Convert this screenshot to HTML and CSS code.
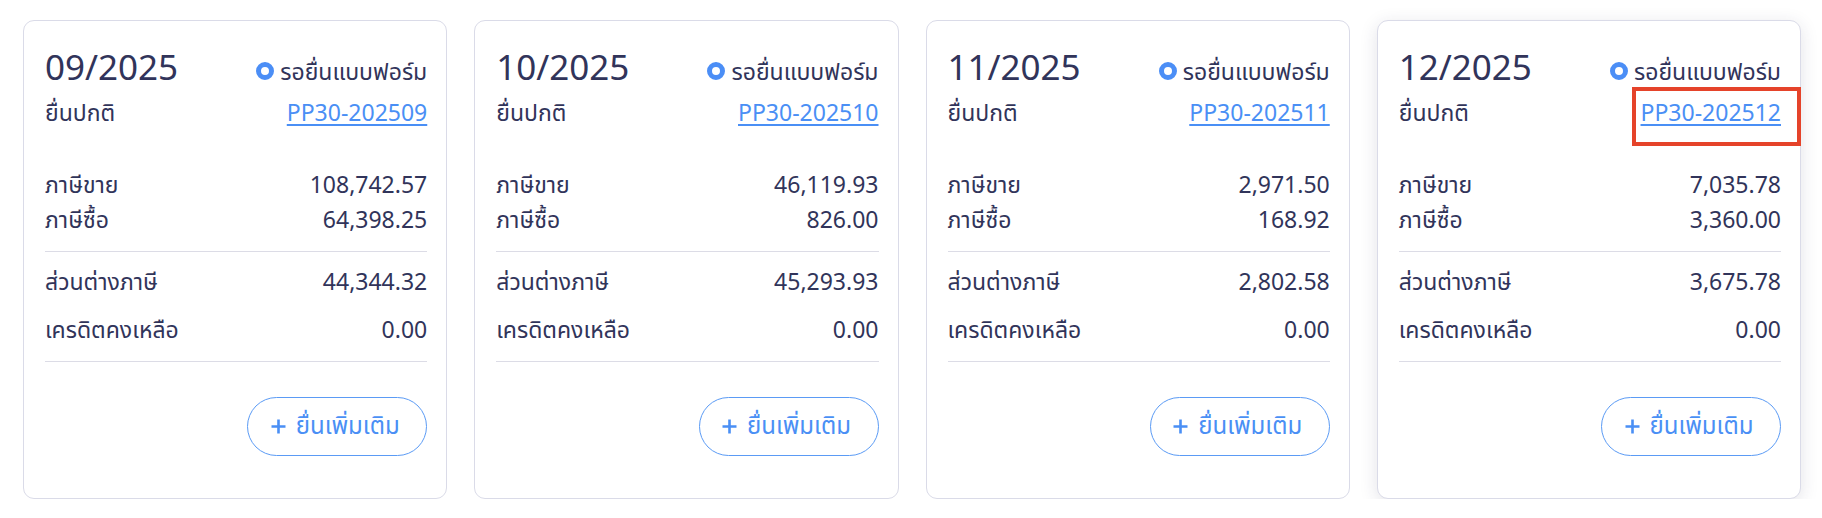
FILE: index.html
```html
<!DOCTYPE html>
<html lang="th">
<head>
<meta charset="utf-8">
<link rel="stylesheet" href="styles.css">
</head>
<body>
<div class="cards">
  <div class="card">
    <div class="head">
      <div class="period">09/2025</div>
      <div class="status"><span class="dot"></span>รอยื่นแบบฟอร์ม</div>
    </div>
    <div class="row sub"><span>ยื่นปกติ</span><a class="link" href="#">PP30-202509</a></div>
    <div class="group first">
      <div class="row"><span>ภาษีขาย</span><span>108,742.57</span></div>
      <div class="row"><span>ภาษีซื้อ</span><span>64,398.25</span></div>
    </div>
    <div class="group second">
      <div class="row"><span>ส่วนต่างภาษี</span><span>44,344.32</span></div>
      <div class="row"><span>เครดิตคงเหลือ</span><span>0.00</span></div>
    </div>
    <div class="actions"><button class="btn"><svg class="plus" width="15" height="15" viewBox="0 0 15 15"><path d="M7.5 0.5v14M0.5 7.5h14" stroke="currentColor" stroke-width="2.6" fill="none"/></svg><span>ยื่นเพิ่มเติม</span></button></div>
  </div>
  <div class="card">
    <div class="head">
      <div class="period">10/2025</div>
      <div class="status"><span class="dot"></span>รอยื่นแบบฟอร์ม</div>
    </div>
    <div class="row sub"><span>ยื่นปกติ</span><a class="link" href="#">PP30-202510</a></div>
    <div class="group first">
      <div class="row"><span>ภาษีขาย</span><span>46,119.93</span></div>
      <div class="row"><span>ภาษีซื้อ</span><span>826.00</span></div>
    </div>
    <div class="group second">
      <div class="row"><span>ส่วนต่างภาษี</span><span>45,293.93</span></div>
      <div class="row"><span>เครดิตคงเหลือ</span><span>0.00</span></div>
    </div>
    <div class="actions"><button class="btn"><svg class="plus" width="15" height="15" viewBox="0 0 15 15"><path d="M7.5 0.5v14M0.5 7.5h14" stroke="currentColor" stroke-width="2.6" fill="none"/></svg><span>ยื่นเพิ่มเติม</span></button></div>
  </div>
  <div class="card">
    <div class="head">
      <div class="period">11/2025</div>
      <div class="status"><span class="dot"></span>รอยื่นแบบฟอร์ม</div>
    </div>
    <div class="row sub"><span>ยื่นปกติ</span><a class="link" href="#">PP30-202511</a></div>
    <div class="group first">
      <div class="row"><span>ภาษีขาย</span><span>2,971.50</span></div>
      <div class="row"><span>ภาษีซื้อ</span><span>168.92</span></div>
    </div>
    <div class="group second">
      <div class="row"><span>ส่วนต่างภาษี</span><span>2,802.58</span></div>
      <div class="row"><span>เครดิตคงเหลือ</span><span>0.00</span></div>
    </div>
    <div class="actions"><button class="btn"><svg class="plus" width="15" height="15" viewBox="0 0 15 15"><path d="M7.5 0.5v14M0.5 7.5h14" stroke="currentColor" stroke-width="2.6" fill="none"/></svg><span>ยื่นเพิ่มเติม</span></button></div>
  </div>
  <div class="card hover">
    <div class="head">
      <div class="period">12/2025</div>
      <div class="status"><span class="dot"></span>รอยื่นแบบฟอร์ม</div>
    </div>
    <div class="row sub"><span>ยื่นปกติ</span><span class="marked"><a class="link" href="#">PP30-202512</a></span></div>
    <div class="group first">
      <div class="row"><span>ภาษีขาย</span><span>7,035.78</span></div>
      <div class="row"><span>ภาษีซื้อ</span><span>3,360.00</span></div>
    </div>
    <div class="group second">
      <div class="row"><span>ส่วนต่างภาษี</span><span>3,675.78</span></div>
      <div class="row"><span>เครดิตคงเหลือ</span><span>0.00</span></div>
    </div>
    <div class="actions"><button class="btn"><svg class="plus" width="15" height="15" viewBox="0 0 15 15"><path d="M7.5 0.5v14M0.5 7.5h14" stroke="currentColor" stroke-width="2.6" fill="none"/></svg><span>ยื่นเพิ่มเติม</span></button></div>
  </div>
</div>
</body>
</html>
```
FILE: styles.css
```css
* { box-sizing: border-box; }
body {
  margin: 0;
  background: #ffffff;
  font-family: "Noto Sans", "Noto Sans Thai", sans-serif;
  color: #31345a;
}
.cards {
  display: flex;
  gap: 27px;
  padding: 20px 21px 0 23px;
}
.card {
  flex: 1;
  height: 479px;
  border: 1px solid #dadbe8;
  border-radius: 11px;
  padding: 23px 19px 0 21px;
  background: #fff;
}
.card.hover {
  box-shadow: 0 4px 18px rgba(40, 40, 80, 0.13);
}
.head {
  display: flex;
  justify-content: space-between;
  align-items: baseline;
  height: 46px;
}
.period {
  font-size: 35px;
  line-height: 46px;
}
.status {
  display: flex;
  align-items: center;
  font-size: 23px;
  line-height: 35px;
}
.dot {
  width: 18px;
  height: 18px;
  border: 5px solid #4b8ef6;
  border-radius: 50%;
  margin-right: 6px;
}
.row {
  display: flex;
  justify-content: space-between;
  font-size: 23px;
  line-height: 35px;
}
.sub { margin-top: 5px; }
.link {
  color: #4a8ff5;
  text-decoration: underline;
  text-underline-offset: 3px;
}
.marked {
  display: block;
  position: relative;
}
.marked::after {
  content: "";
  position: absolute;
  left: -9px;
  top: -8px;
  width: calc(100% + 21px);
  height: calc(100% + 16px);
  border: 4px solid #e5432a;
  pointer-events: none;
}
.group.first {
  margin-top: 37px;
  padding-bottom: 14px;
  border-bottom: 1px solid #dcdce6;
}
.group.second {
  padding-top: 12px;
  padding-bottom: 14px;
  display: flex;
  flex-direction: column;
  gap: 13px;
  border-bottom: 1px solid #dcdce6;
}
.actions {
  display: flex;
  justify-content: flex-end;
  margin-top: 35px;
}
.btn {
  display: flex;
  align-items: center;
  justify-content: center;
  gap: 10px;
  width: 180px;
  height: 59px;
  border: 1px solid #5b9bf5;
  border-radius: 30px;
  background: #fff;
  color: #4a8ff5;
  font-family: inherit;
  font-size: 24px;
  padding: 0 4px 0 0;
}
.plus { display: block; }
```
